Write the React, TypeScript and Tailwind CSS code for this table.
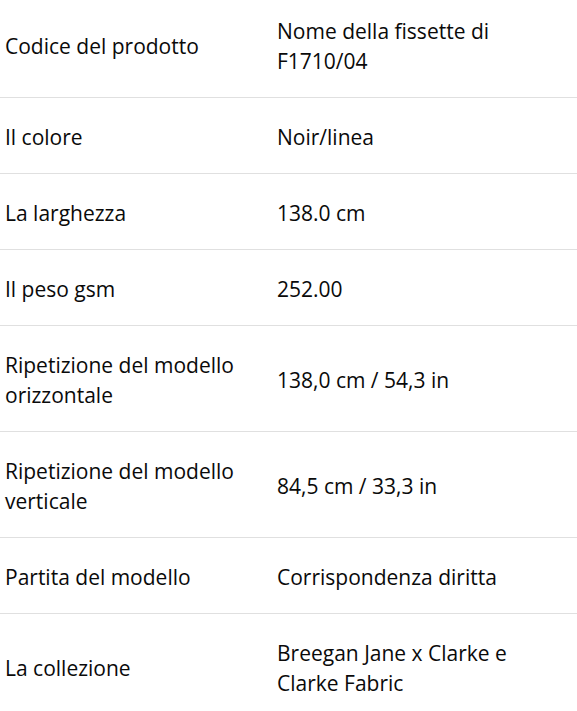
import * as React from "react";

const rows: { label: React.ReactNode; value: React.ReactNode }[] = [
  { label: "Codice del prodotto", value: <>Nome della fissette di<br />F1710/04</> },
  { label: "Il colore", value: "Noir/linea" },
  { label: "La larghezza", value: "138.0 cm" },
  { label: "Il peso gsm", value: "252.00" },
  { label: <>Ripetizione del modello<br />orizzontale</>, value: "138,0 cm / 54,3 in" },
  { label: <>Ripetizione del modello<br />verticale</>, value: "84,5 cm / 33,3 in" },
  { label: "Partita del modello", value: "Corrispondenza diritta" },
  { label: "La collezione", value: <>Breegan Jane x Clarke e<br />Clarke Fabric</> },
];

export default function App() {
  return (
    <div
      className="w-[577px] h-[711px] overflow-hidden bg-white text-[#0a0a0a] text-[21px] leading-[30px]"
      style={{ fontFamily: "'Open Sans', 'Noto Sans', sans-serif" }}
    >
      {/* spec table, page scrolled a few px */}
      <div className="-mt-[8px] flex flex-col">
        {rows.map((row, i) => (
          <div
            key={i}
            className="grid grid-cols-[272px_1fr] items-center pt-[24px] pb-[21px] border-b border-[#e0e0e0]"
          >
            <div className="pl-[5px]">{row.label}</div>
            <div className="pl-[5px]">{row.value}</div>
          </div>
        ))}
      </div>
    </div>
  );
}
